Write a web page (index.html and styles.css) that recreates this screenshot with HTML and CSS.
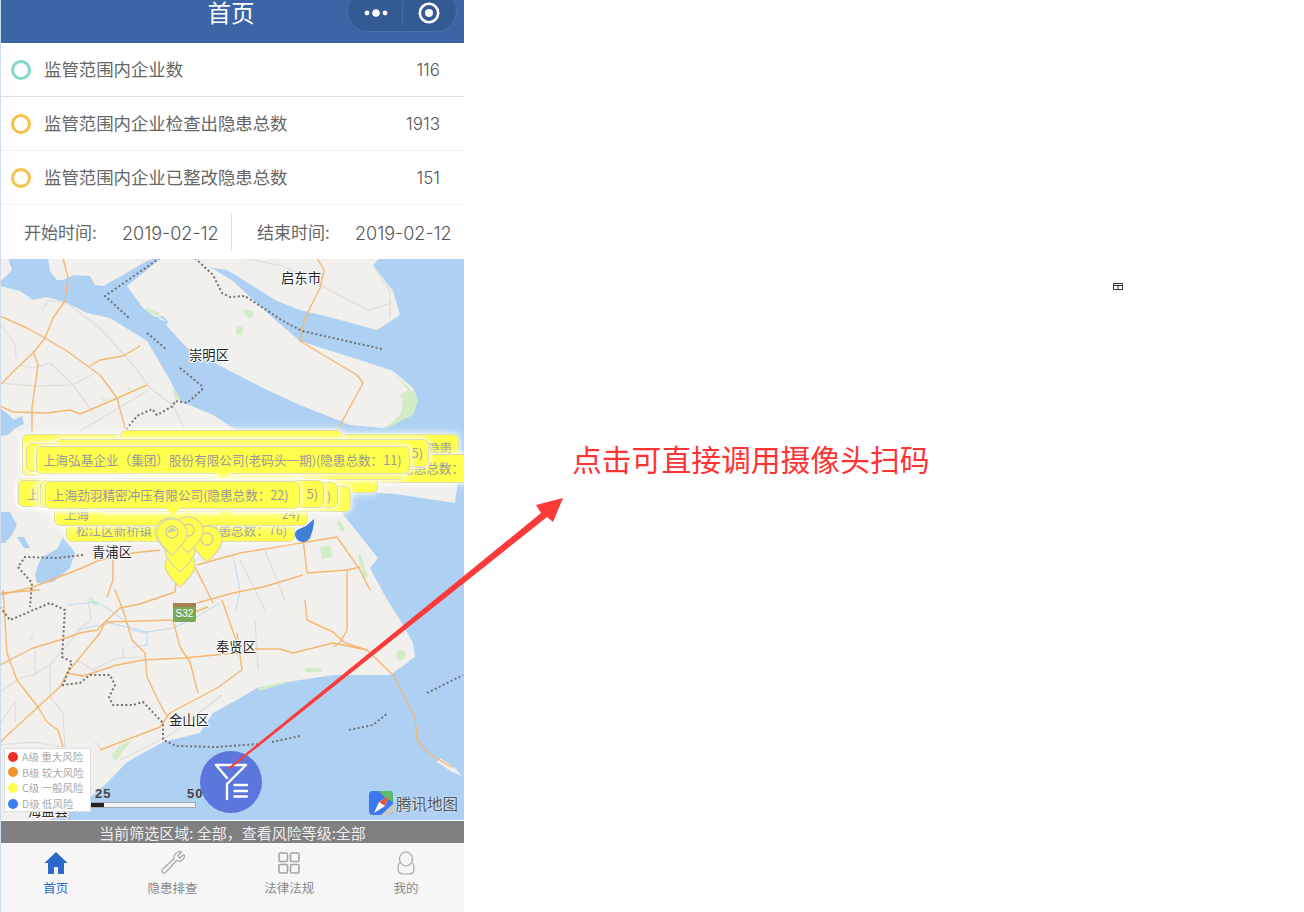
FILE: index.html
```html
<!DOCTYPE html>
<html lang="zh-CN">
<head>
    <meta charset="UTF-8">
    <meta name="viewport" content="width=device-width, initial-scale=1.0">
    <title>首页</title>
    <link rel="stylesheet" href="styles.css">
</head>
<body>

<div class="phone">
    <!-- 顶部导航 -->
    <header class="navbar">
        <h1 class="nav-title">首页</h1>
        <div class="capsule">
            <svg class="capsule-dots" viewBox="0 0 24 8" width="24" height="8"><circle cx="3" cy="4" r="2.4"/><circle cx="12" cy="4" r="3.800"/><circle cx="21" cy="4" r="2.4"/></svg>
            <span class="capsule-line"></span>
            <svg class="capsule-target" viewBox="0 0 22 22" width="22" height="22"><circle cx="11" cy="11" r="9.200" fill="none" stroke="#fff" stroke-width="2.6"/><circle cx="11" cy="11" r="4" fill="#fff"/></svg>
        </div>
    </header>

    <!-- 统计 -->
    <div class="stat-row stat-first">
        <span class="ring ring-green"></span>
        <span class="stat-name">监管范围内企业数</span>
        <span class="stat-num">116</span>
    </div>
    <div class="stat-row">
        <span class="ring ring-orange"></span>
        <span class="stat-name">监管范围内企业检查出隐患总数</span>
        <span class="stat-num">1913</span>
    </div>
    <div class="stat-row">
        <span class="ring ring-orange"></span>
        <span class="stat-name">监管范围内企业已整改隐患总数</span>
        <span class="stat-num">151</span>
    </div>

    <!-- 时间 -->
    <div class="date-row">
        <div class="date-cell date-start">
            <span class="date-label">开始时间:</span>
            <span class="date-value">2019-02-12</span>
        </div>
        <div class="date-cell date-end">
            <span class="date-label">结束时间:</span>
            <span class="date-value">2019-02-12</span>
        </div>
    </div>

    <!-- 地图 -->
    <div class="map">
        <svg class="map-base" viewBox="1 259 463 561" width="463" height="561">
            <rect x="0" y="250" width="470" height="580" fill="#aed1f3"/>
            <g fill="#f1f0ed">
                <path d="M48 258L50 271 57 280 63 280 73 275 90 276 95 285 103 286 123 275 147 261 157 258Z"/>
                <path d="M0 258H8L12 270 2 280 0 280Z"/>
                <path d="M127 286L143 308 167 326 187 348 230 371 267 390 300 405 350 425 383 428 410 415 418 401 413 388 393 371 363 361 300 341 273 318 233 281 200 261 187 258H160L147 270Z"/>
                <path d="M190 258L213 268 227 270 240 278 277 301 300 310 333 318 377 330 400 315 393 291 373 265 380 258Z"/>
                <path d="M0 286L20 291 33 300 47 297 67 303 87 313 110 318 147 341 170 380 180 401 213 415 233 428 300 470 342 513 378 558 370 568 385 596 400 620 413 643 415 657 390 675 333 675 287 682 257 688 242 697 213 713 200 733 163 742 127 762 107 783 83 803 50 820H0Z"/>
                <path d="M370 480H458L455 503 395 494 378 493Z"/>
                <path d="M437 762L452 772 462 776 455 768 440 758Z"/>
            </g>
            <path d="M154 317L163 316 168 322 167 325 159 322Z" fill="#aed1f3"/>
            <path d="M158 316L166 321 160 320Z" fill="#f1f0ed"/>
            <!-- 湖泊 -->
            <g fill="#aed1f3">
                <path d="M35 575L37 583 53 582 70 568 75 553 63 537 58 548 50 553 42 557 38 565Z"/>
                <path d="M17 537L24 537 30 548 24 548Z"/>
                <path d="M0 512L10 512 17 525 12 535 5 543 0 543Z"/>
                <path d="M0 408L8 414 14 420 22 416 24 424 16 428 8 435 0 436Z"/>
            </g>
            <g fill="#d2ecc5">
                <path d="M393 373L413 391 418 401 413 415 383 430 400 415 403 401 400 395 408 390Z"/>
                <path d="M244 309L254 312 252 318 245 316Z"/>
                <path d="M236 326L243 327 242 335 236 334Z"/>
                <path d="M146 308L160 313 157 316 146 311Z"/>
                <path d="M258 688L287 681 283 684 259 691Z"/>
                <path d="M305 668H321V672H305Z"/>
                <circle cx="401" cy="655" r="5"/>
                <path d="M174 388L180 398 176 401 173 392Z"/>
                <path d="M320 547L330 545 333 556 322 559Z"/>
                <path d="M360 553L368 577 364 578 358 556Z"/>
                <path d="M132 740L115 762 112 755 120 745Z"/>
                <path d="M340 520L345 530 341 532 337 522Z"/>
                <path d="M30 635L34 637 31 640Z"/>
                <path d="M25 300H37L33 299Z"/>
                <path d="M129 385L132 392 128 390Z"/>
                <path d="M102 398L108 400 103 402Z"/>
                <path d="M90 597L100 605 96 606 89 600Z"/>
            </g>
            <g fill="none" stroke="#dfddd9" stroke-width="1.2">
                <path d="M42 310L48 301 67 303 100 328 133 365 150 388 173 405 185 430"/>
                <path d="M0 383L33 386 73 385 95 373"/>
                <path d="M20 365L33 368 50 363 73 385 97 418"/>
                <path d="M80 431L147 391"/>
                <path d="M243 258L283 266 368 310 392 303"/>
                <path d="M373 265L390 291 390 318"/>
                <path d="M0 323L15 345 16 358"/>
                <path d="M0 692L20 678 33 675 50 665 77 633 80 628"/>
                <path d="M50 665V697L63 713 65 747"/>
                <path d="M35 650V673"/>
                <path d="M77 660L93 670 117 658 143 657"/>
                <path d="M0 723L15 702V722"/>
                <path d="M0 745L33 742 63 747"/>
                <path d="M95 742L103 750"/>
                <path d="M88 600L91 620 80 628"/>
                <path d="M255 620L258 670"/>
                <path d="M240 560L265 610"/>
                <path d="M265 550L285 600"/>
                <path d="M120 760L170 735 222 695"/>
            </g>
            <g fill="none" stroke="#bcd9f4" stroke-width="1">
                <path d="M68 605L97 602 110 610 127 623 132 630 147 633 147 645 133 647"/>
                <path d="M78 630L110 623 147 632 173 628 195 618 220 603"/>
                <path d="M233 555L240 590 236 610"/>
                <path d="M123 647V658"/>
            </g>
            <g fill="none" stroke="#f5b771" stroke-width="1.400" stroke-linejoin="round">
                <path d="M63 258L68 278 65 301 53 318 45 338 33 353 17 368 0 385"/>
                <path d="M0 316L27 328 45 338 67 351 100 375 117 398 125 428"/>
                <path d="M33 351L38 365 32 408 32 435"/>
                <path d="M90 366L100 360 123 356 140 346"/>
                <path d="M0 406L13 412 47 413 70 410 80 414 113 400 147 385"/>
                <path d="M317 258L324 270 320 288 305 318 300 341 320 353 357 375 363 383 337 431"/>
                <path d="M0 595L33 587 77 570 100 560 113 558 133 553 160 550"/>
                <path d="M113 558V580L107 597"/>
                <path d="M0 593L40 590"/>
                <path d="M3 590L7 653 17 680 38 707 47 722 58 730 63 747"/>
                <path d="M0 665L33 648 60 640 80 633 97 630 105 622 173 620 208 607"/>
                <path d="M105 622L120 608 140 604 175 592 177 575"/>
                <path d="M115 590L123 610 132 640 145 653 147 677 158 700 168 718"/>
                <path d="M105 622L100 633 67 673 60 687 38 707 0 742"/>
                <path d="M67 673L83 676 117 665 143 660 183 658 237 653 253 649 280 649 293 653 333 643 367 650"/>
                <path d="M237 633L242 670 217 688 170 713 160 727 100 750"/>
                <path d="M173 620L180 647 190 662 198 693"/>
                <path d="M222 600L237 643"/>
                <path d="M305 600L307 620 333 632 345 643 367 650 393 675 415 717 417 740 428 753 453 768"/>
                <path d="M347 570V630L340 643 333 647"/>
                <path d="M197 565L240 553 337 537 360 570 370 590"/>
                <path d="M302 530L307 573 347 570 360 567"/>
                <path d="M195 567L213 603"/>
                <path d="M197 603L233 593 263 587 303 575"/>
            </g>
            <g fill="none" stroke="#707070" stroke-width="2" stroke-dasharray="2 2.400">
                <path d="M160 258L105 296 129 318"/>
                <path d="M147 333L166 349"/>
                <path d="M180 368L202 386V390L187 403 175 401 173 406 157 415 152 409 137 416 125 431"/>
                <path d="M195 258L213 275 222 293 230 297 245 296 283 321 302 331 382 349"/>
                <path d="M83 555L57 558 25 557 18 567 32 583 30 607"/>
                <path d="M0 607L10 620 50 603 65 610 62 657 72 662 63 685 80 683 90 675 110 675 115 685 109 697 113 705 133 705 143 702 163 723 163 740 177 746 217 747 257 744"/>
                <path d="M272 742L300 736"/>
                <path d="M349 730L373 725 388 713"/>
                <path d="M427 693L463 675"/>
            </g>
            <g class="shield">
                <rect x="173" y="603" width="23" height="19" rx="2" fill="#7aa95c"/>
                <rect x="173" y="603" width="23" height="4" fill="#a67f4e"/>
                <text x="184.500" y="617" text-anchor="middle">S32</text>
            </g>
            <g class="place">
                <text x="301" y="283">启东市</text>
                <text x="209" y="360">崇明区</text>
                <text x="112" y="557">青浦区</text>
                <text x="236" y="652">奉贤区</text>
                <text x="189" y="725">金山区</text>
                <text x="48" y="816">海盐县</text>
            </g>
        </svg>

        <!-- 企业标注 -->
        <div class="callout c1"><span>隐患</span></div>
        <div class="callout c2"></div>
        <div class="callout c3"><span>隐患总数：</span></div>
        <div class="callout c7"></div>
        <div class="callout c4"></div>
        <div class="callout c5"><span>5)</span></div>
        <div class="callout c15"></div>
        <div class="callout tailed c6">上海弘基企业（集团）股份有限公司(老码头一期)(隐患总数：11)</div>
        <div class="callout c8"><span>松江区新桥镇</span><span>隐患总数：76)</span></div>
        <div class="callout c9"><span>上海</span><span>24)</span></div>
        <i class="tail t1"></i>
        <i class="tail t2"></i>
        <div class="callout c10"></div>
        <div class="callout c16">上海</div>
        <div class="callout tailed c14"><span>)</span></div>
        <div class="callout tailed c11"><span>)</span></div>
        <div class="callout c12"><span>5)</span></div>
        <div class="callout tailed c13">上海劲羽精密冲压有限公司(隐患总数：22)</div>

        <svg class="pins" viewBox="1 259 463 561" width="463" height="561">
            <defs>
                <path id="drop" d="M0 0C-8.500 0-15 6.500-15 14.500-15 23 0 36 0 36S15 23 15 14.500C15 6.500 8.500 0 0 0Z" fill="#ffff4d" stroke="#d9d9a6" stroke-width="1.300"/>
                <g id="pin">
                    <use href="#drop"/>
                    <circle cx="0" cy="13" r="6" fill="none" stroke="#cfcf9c" stroke-width="1.500"/>
                </g>
            </defs>
            <path d="M295 533A8 8 0 0 0 311 535C313 530 314 525 314 519L306 526 297 530Z" fill="#3f7fd6"/>
            <use href="#drop" x="180" y="551"/>
            <use href="#drop" x="180" y="536"/>
            <use href="#pin" x="207" y="526"/>
            <use href="#pin" x="188" y="517"/>
            <use href="#drop" x="170" y="518"/>
            <use href="#pin" x="172" y="519"/>
            <path d="M168 533A4 4 0 0 1 176 531Z" fill="#cfcf9c"/>
        </svg>

        <div class="scale">
            <span class="scale-25">25</span>
            <span class="scale-50">50</span>
            <div class="scale-bar"><div class="scale-fill"></div></div>
        </div>

        <div class="legend">
            <div class="legend-row"><i class="dot dot-a"></i>A级 重大风险</div>
            <div class="legend-row"><i class="dot dot-b"></i>B级 较大风险</div>
            <div class="legend-row"><i class="dot dot-c"></i>C级 一般风险</div>
            <div class="legend-row"><i class="dot dot-d"></i>D级 低风险</div>
        </div>

        <button class="filter-btn">
            <svg viewBox="0 0 62 62" width="62" height="62" fill="none" stroke="#fff" stroke-width="2.400" stroke-linejoin="round" stroke-linecap="round">
                <path d="M16 14H46L27 33V48"/>
                <path d="M16 14L27 27"/>
                <path d="M34.500 34H47M34.500 40H47M34.500 45.500H47"/>
            </svg>
        </button>

        <div class="tencent">
            <svg viewBox="0 0 24 24" width="24" height="24">
                <rect width="24" height="24" rx="4" fill="#3f78ee"/>
                <path d="M9 0H20A4 4 0 0 1 24 4V11L18 8Z" fill="#58bb6a"/>
                <path d="M24 13V20A4 4 0 0 1 20 24H12Z" fill="#c8c8c8"/>
                <path d="M5 22L10 11 20 5 16 15Z" fill="#fff"/>
                <path d="M10 11L20 5 16 15Z" fill="#e8552f"/>
            </svg>
            <span class="tencent-name">腾讯地图</span>
        </div>
    </div>

    <div class="filter-status">当前筛选区域: 全部，查看风险等级:全部</div>

    <!-- 底部菜单 -->
    <nav class="tabbar">
        <div class="tab tab-active">
            <svg viewBox="0 0 24 24" width="24" height="24"><path d="M12 1L0.500 12H4V23H10V16H14V23H20V12H23.500Z" fill="#2c68c9"/></svg>
            <span>首页</span>
        </div>
        <div class="tab">
            <svg viewBox="0 0 24 24" width="24" height="24" fill="none" stroke="#a5a5a5" stroke-width="1.200"><path d="M17 1C20 0 21 1 20 1.500L17 4.500 19 7 22 4C23.500 3.500 24 5 23 7 21.500 10 18 11 15.500 9.500L5 21C3 24 -1 20 2 18L13 7.500C12.500 5 14 2 17 1Z"/></svg>
            <span>隐患排查</span>
        </div>
        <div class="tab">
            <svg viewBox="0 0 24 24" width="24" height="24" fill="none" stroke="#a5a5a5" stroke-width="1.600"><rect x="2" y="2" width="8.500" height="8.500" rx="1.500"/><rect x="13.500" y="2" width="8.500" height="8.500" rx="1.500"/><rect x="2" y="13.500" width="8.500" height="8.500" rx="1.500"/><rect x="13.500" y="13.500" width="8.500" height="8.500" rx="1.500"/></svg>
            <span>法律法规</span>
        </div>
        <div class="tab">
            <svg viewBox="0 0 24 24" width="24" height="24" fill="none" stroke="#a5a5a5" stroke-width="1.200"><ellipse cx="12" cy="8" rx="6.500" ry="7"/><path d="M5.500 12C4 13 4 14 4 18 4 21.500 6 23 9 23H15C18 23 20 21.500 20 18 20 14 20 13 18.500 12"/></svg>
            <span>我的</span>
        </div>
    </nav>
</div>

<!-- 说明标注 -->
<svg class="arrow" viewBox="0 0 600 800" width="600" height="800">
    <path d="M228 768L541 513 536 505 563 498 553 522 547 517 230 769Z" fill="#fb3a3a"/>
</svg>
<p class="note">点击可直接调用摄像头扫码</p>
<svg class="tiny-icon" viewBox="0 0 10 7" width="10" height="7" fill="none" stroke="#333"><path d="M.5 .5H9.500V6.500H.5ZM.5 2.500H9.500M5 2.500V6.500"/></svg>

</body>
</html>
```

FILE: styles.css
```css
body {
    margin: 0;
    padding: 0;
    background-color: #fff;
    font-family: "Noto Sans CJK SC", "Noto Sans", sans-serif;
    position: relative;
    height: 912px;
    overflow: hidden;
}
.phone {
    width: 463px;
    height: 912px;
    border-left: 1px solid #cfdcee;
    display: flex;
    flex-direction: column;
}

/* 顶部导航 */
.navbar {
    height: 43px;
    flex: none;
    background-color: #3c65a5;
    position: relative;
}
.nav-title {
    margin: 0;
    width: 460px;
    text-align: center;
    color: #fff;
    font-size: 23.500px;
    font-weight: 400;
    line-height: 24px;
}
.capsule {
    position: absolute;
    left: 346px;
    top: -10px;
    width: 110px;
    height: 42px;
    box-sizing: border-box;
    border-radius: 21px;
    border: 1px solid #4a70aa;
    background-color: #335a93;
    display: flex;
    align-items: center;
    padding-top: 4px;
}
.capsule-dots {
    fill: #fff;
    margin-left: 16px;
}
.capsule-line {
    width: 1px;
    height: 24px;
    margin-left: 14px;
    background-color: #46699e;
}
.capsule-target {
    margin-left: 15px;
}

/* 统计 */
.stat-row {
    height: 54px;
    flex: none;
    box-sizing: border-box;
    display: flex;
    align-items: center;
    border-bottom: 1px solid #f3f3f3;
    padding: 0 24px 0 10px;
    color: #666;
    font-size: 17.400px;
}
.stat-first {
    border-bottom-color: #ddd;
}
.ring {
    width: 20px;
    height: 20px;
    box-sizing: border-box;
    border-radius: 50%;
    border: 3.800px solid #7fd8c8;
    margin-right: 13px;
}
.ring-green {
    border-color: #7fd8c8;
}
.ring-orange {
    border-color: #fac149;
}
.stat-name {
    flex: 1;
    line-height: 1;
    margin-top: -1px;
}
.stat-num {
    font-family: Inter, "Noto Sans", sans-serif;
    font-size: 17px;
    font-weight: 300;
    color: #555;
}

/* 时间 */
.date-row {
    height: 54px;
    flex: none;
    box-sizing: border-box;
    display: flex;
    align-items: center;
    color: #666;
}
.date-cell {
    height: 38px;
    display: flex;
    align-items: center;
    box-sizing: border-box;
}
.date-start {
    width: 231px;
    padding-left: 23px;
    border-right: 1px solid #ddd;
}
.date-end {
    padding-left: 25px;
}
.date-label {
    font-size: 17px;
    width: 98px;
    margin-top: -2px;
}
.date-value {
    font-family: Inter, "Noto Sans", sans-serif;
    font-size: 18px;
    font-weight: 300;
    color: #555;
    padding-top: 3px;
    white-space: nowrap;
}

/* 地图 */
.map {
    flex: 1;
    position: relative;
    overflow: hidden;
    border-bottom: 1px solid #fff;
}
.map-base, .pins {
    position: absolute;
    left: 0;
    top: 0;
}
.place text {
    font-size: 13.300px;
    fill: #222;
    text-anchor: middle;
    stroke: #fff;
    stroke-width: 2px;
    paint-order: stroke;
}
.shield text {
    font-size: 10px;
    fill: #fff;
    font-family: "Liberation Sans", sans-serif;
}
.callout {
    position: absolute;
    box-sizing: border-box;
    background-color: #ffff4d;
    border: 1px solid #dcdcb4;
    border-radius: 6px;
    box-shadow: 0 0 8px rgba(255, 255, 255, 0.95), 0 0 3px #fff;
    color: #999;
    font-size: 12.600px;
    line-height: 26px;
    padding: 0 6px;
    white-space: nowrap;
    display: flex;
    justify-content: space-between;
}
.tailed::after, .tail {
    content: "";
    position: absolute;
    bottom: -7px;
    left: 50%;
    margin-left: -7px;
    border-left: 7px solid transparent;
    border-right: 7px solid transparent;
    border-top: 7px solid #ffff4d;
}
.t1 { left: 206px; top: 259px; bottom: auto; margin-left: -7px; }
.t2 { left: 247px; top: 259px; bottom: auto; margin-left: -7px; }
.c1 { left: 21px; top: 175px; width: 437px; height: 42px; justify-content: flex-end; }
.c2 { left: 119px; top: 171px; width: 223px; height: 30px; }
.c3 { left: 140px; top: 195px; width: 331px; height: 29px; justify-content: flex-end; padding-right: 7px; }
.c4 { left: 25px; top: 184px; width: 300px; height: 29px; }
.c5 { left: 54px; top: 180px; width: 374px; height: 28px; justify-content: flex-end; padding-right: 5px; }
.c15 { left: 300px; top: 196px; width: 103px; height: 25px; }
.c6 { left: 35px; top: 187px; width: 374px; height: 28px; }
.c7 { left: 299px; top: 206px; width: 78px; height: 28px; }
.c8 { left: 65px; top: 255px; width: 229px; height: 28px; padding: 2px 7px 0 9px; }
.c9 { left: 53px; top: 241px; width: 254px; height: 26px; padding: 0 7px 0 9px; }
.c10 { left: 16px; top: 219px; width: 200px; height: 29px; }
.c16 { left: 17px; top: 221px; width: 100px; height: 27px; padding-left: 8px; }
.c14 { left: 99px; top: 227px; width: 251px; height: 26px; justify-content: flex-end; padding-right: 20px; }
.c11 { left: 36px; top: 223px; width: 301px; height: 26px; justify-content: flex-end; }
.c12 { left: 39px; top: 221px; width: 284px; height: 28px; justify-content: flex-end; padding-right: 5px; }
.c13 { left: 44px; top: 222px; width: 255px; height: 28px; }

.legend {
    position: absolute;
    left: 3px;
    top: 489px;
    width: 87px;
    height: 64px;
    box-sizing: border-box;
    padding: 0 0 0 3px;
    background-color: #fff;
    border: 1px solid #ddd;
    color: #aaa;
    font-size: 10.500px;
}
.legend-row {
    display: flex;
    align-items: center;
    height: 15.600px;
    white-space: nowrap;
}
.dot {
    width: 10px;
    height: 10px;
    border-radius: 50%;
    margin-right: 4px;
    flex: none;
}
.dot-a { background-color: #ee2f24; }
.dot-b { background-color: #f3932f; }
.dot-c { background-color: #ffff4d; }
.dot-d { background-color: #3a7ff0; }

.scale {
    position: absolute;
    left: 80px;
    top: 527px;
    width: 116px;
    height: 24px;
    color: #444;
    font-family: "Liberation Sans", sans-serif;
    font-size: 13px;
    font-weight: 700;
    letter-spacing: 1px;
}
.scale-25 {
    position: absolute;
    left: 14px;
    top: 0;
}
.scale-50 {
    position: absolute;
    left: 106px;
    top: 0;
}
.scale-bar {
    position: absolute;
    left: 0;
    top: 16px;
    width: 115px;
    height: 6px;
    box-sizing: border-box;
    border: 1px solid #a9a9a9;
    background-color: #eef3fa;
}
.scale-fill {
    width: 22px;
    height: 100%;
    background-color: #222;
}
.filter-btn {
    position: absolute;
    left: 199px;
    top: 492px;
    width: 62px;
    height: 62px;
    padding: 0;
    border: none;
    border-radius: 50%;
    background-color: #5b76dc;
}
.filter-btn svg {
    display: block;
}
.tencent {
    position: absolute;
    left: 368px;
    top: 532px;
    display: flex;
    align-items: center;
    gap: 3px;
}
.tencent-name {
    font-size: 15.500px;
    color: #555;
    text-shadow: 0 0 2px #fff;
    white-space: nowrap;
}

.filter-status {
    height: 22px;
    flex: none;
    background-color: #808080;
    color: #eee;
    font-size: 15px;
    line-height: 23px;
    text-align: center;
    white-space: nowrap;
}

/* 底部菜单 */
.tabbar {
    height: 69px;
    flex: none;
    background-color: #f6f6f6;
    display: flex;
    padding-top: 8px;
    box-sizing: border-box;
}
.tab {
    flex: 0 0 116.700px;
    display: flex;
    flex-direction: column;
    align-items: center;
    color: #888;
    font-size: 12.500px;
}
.tab:first-child {
    margin-left: -3.500px;
}
.tab span {
    margin-top: 4px;
    line-height: 18px;
}
.tab-active {
    color: #2c68c9;
}

/* 说明标注 */
.arrow {
    position: absolute;
    left: 0;
    top: 0;
    pointer-events: none;
}
.note {
    position: absolute;
    left: 572px;
    top: 439px;
    margin: 0;
    color: #f33;
    font-family: "Liberation Serif", "Noto Sans CJK SC", serif;
    font-size: 29.800px;
    line-height: 44px;
    white-space: nowrap;
}
.tiny-icon {
    position: absolute;
    left: 1113px;
    top: 283px;
}
```
